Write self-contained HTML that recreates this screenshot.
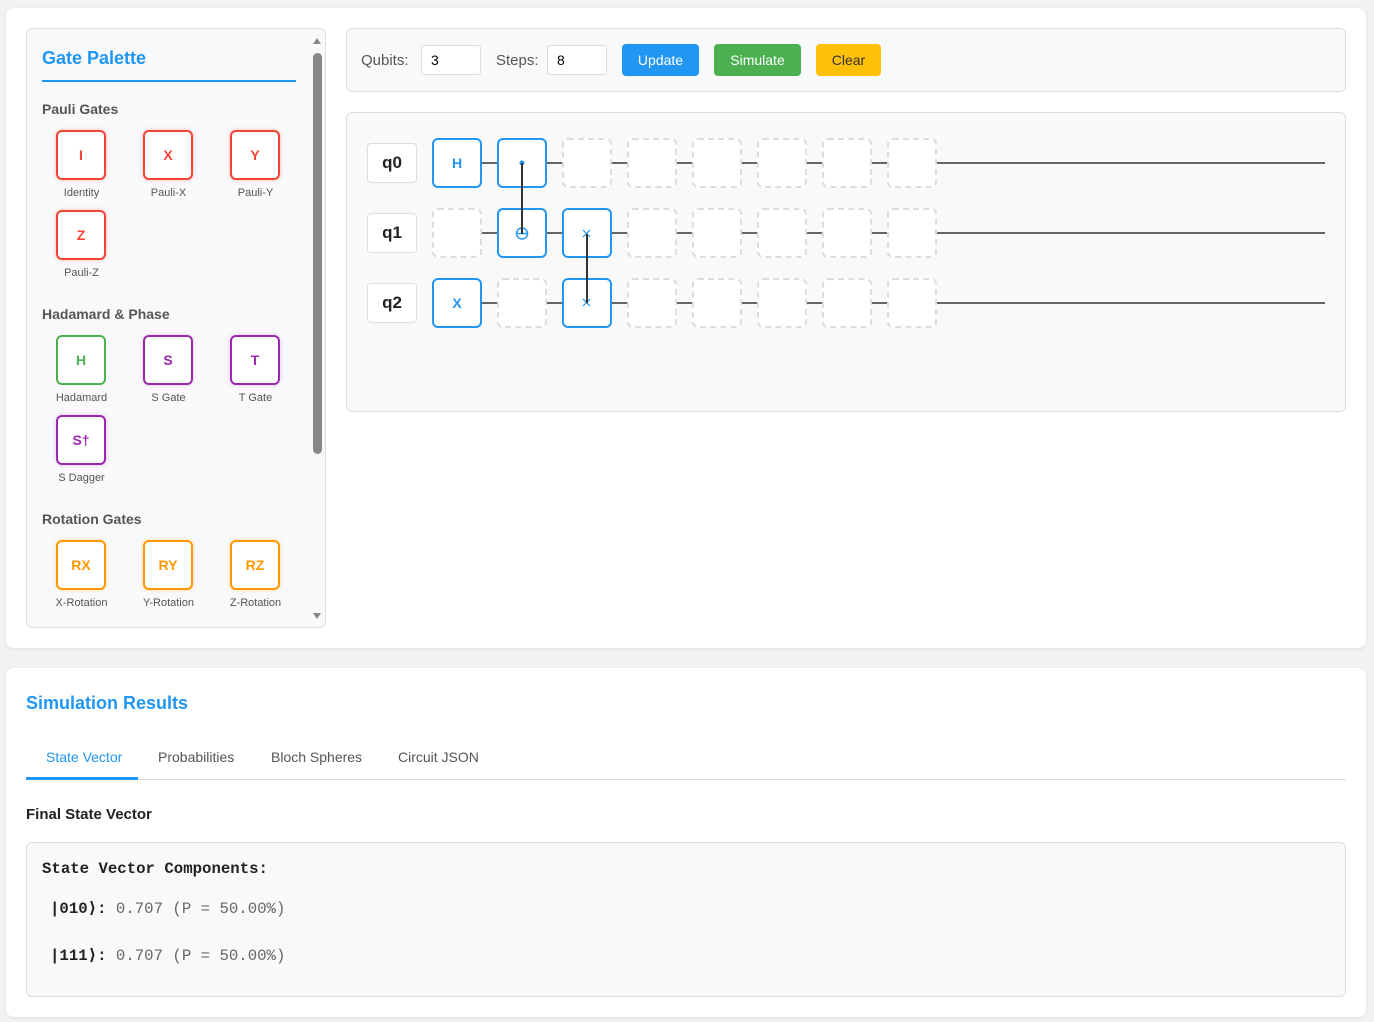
<!DOCTYPE html>
<html><head><meta charset="utf-8"><style>
*{box-sizing:border-box;margin:0;padding:0}
body{width:1374px;height:1022px;background:#f2f2f2;font-family:"Liberation Sans",sans-serif;position:relative;overflow:hidden}
.abs{position:absolute}
.card{position:absolute;background:#fff;border-radius:8px;box-shadow:0 1px 4px rgba(0,0,0,.08)}
.pal{left:26px;top:28px;width:300px;height:600px;background:#f8f9fa;border:1px solid #ddd;border-radius:6px;overflow:hidden}
.h3{font-size:14px;color:#555;font-weight:bold}
.g{position:absolute;width:50px;height:50px;border:2px solid;border-radius:6px;background:#fff;display:flex;align-items:center;justify-content:center;font-weight:bold;font-size:14px}
.gl{position:absolute;width:87px;text-align:center;font-size:11px;color:#555}
.red{border-color:#f44336;color:#f44336;box-shadow:0 0 4px rgba(244,67,54,.3)}
.grn{border-color:#4caf50;color:#4caf50}
.pur{border-color:#9c27b0;color:#9c27b0;box-shadow:0 0 4px rgba(156,39,176,.25)}
.org{border-color:#ff9800;color:#ff9800;box-shadow:0 0 4px rgba(255,152,0,.3)}
.panel{position:absolute;background:#f8f9fa;border:1px solid #ddd;border-radius:6px}
.inp{position:absolute;width:60px;height:30px;background:#fff;border:1px solid #ddd;border-radius:3px;font-size:14px;padding:6px 9px;color:#000}
.btn{position:absolute;height:32px;border-radius:4px;font-size:14px;display:flex;align-items:center;justify-content:center}
.ql{position:absolute;left:367px;width:50px;height:40px;background:#fff;border:1px solid #ddd;border-radius:4px;font-weight:bold;font-size:17px;display:flex;align-items:center;justify-content:center;color:#222}
.cell{position:absolute;width:50px;height:50px;border-radius:6px;background:#fff}
.e{border:2px dashed #ddd}
.f{border:2px solid #2196f3;color:#2196f3;font-weight:bold;font-size:14px;display:flex;align-items:center;justify-content:center}
.wire{position:absolute;left:432px;width:893px;height:2px;background:#666}
.tab{position:absolute;top:749px;font-size:14px;color:#555}
.mono{font-family:"Liberation Mono",monospace;font-size:15.7px}
</style></head><body>
<div class="card" style="left:6px;top:8px;width:1360px;height:640px"></div>
<div class="card" style="left:6px;top:668px;width:1360px;height:349px"></div>

<div class="abs pal">
 <div class="abs" style="left:15px;top:19px;font-size:18px;font-weight:bold;color:#2196f3">Gate Palette</div>
 <div class="abs" style="left:15px;top:51px;width:254px;height:2px;background:#2196f3"></div>
 <div class="abs h3" style="left:15px;top:72px">Pauli Gates</div>
 <div class="abs h3" style="left:15px;top:277px">Hadamard &amp; Phase</div>
 <div class="abs h3" style="left:15px;top:482px">Rotation Gates</div>
 <div class="abs" style="left:282px;top:0;width:18px;height:600px;background:#f8f9fa"></div>
 <div class="abs" style="left:286px;top:24px;width:9px;height:401px;background:#888;border-radius:5px"></div>
 <div class="abs" style="left:286px;top:9px;width:0;height:0;border-left:4.5px solid transparent;border-right:4.5px solid transparent;border-bottom:6px solid #888"></div>
 <div class="abs" style="left:286px;top:584px;width:0;height:0;border-left:4.5px solid transparent;border-right:4.5px solid transparent;border-top:6px solid #888"></div>
</div>
<div class="g red" style="left:56px;top:130px">I</div><div class="gl" style="left:38px;top:187px">Identity</div>
<div class="g red" style="left:143px;top:130px">X</div><div class="gl" style="left:125px;top:187px">Pauli-X</div>
<div class="g red" style="left:230px;top:130px">Y</div><div class="gl" style="left:212px;top:187px">Pauli-Y</div>
<div class="g red" style="left:56px;top:210px">Z</div><div class="gl" style="left:38px;top:267px">Pauli-Z</div>
<div class="g grn" style="left:56px;top:335px">H</div><div class="gl" style="left:38px;top:392px">Hadamard</div>
<div class="g pur" style="left:143px;top:335px">S</div><div class="gl" style="left:125px;top:392px">S Gate</div>
<div class="g pur" style="left:230px;top:335px">T</div><div class="gl" style="left:212px;top:392px">T Gate</div>
<div class="g pur" style="left:56px;top:415px">S†</div><div class="gl" style="left:38px;top:472px">S Dagger</div>
<div class="g org" style="left:56px;top:540px">RX</div><div class="gl" style="left:38px;top:597px">X-Rotation</div>
<div class="g org" style="left:143px;top:540px">RY</div><div class="gl" style="left:125px;top:597px">Y-Rotation</div>
<div class="g org" style="left:230px;top:540px">RZ</div><div class="gl" style="left:212px;top:597px">Z-Rotation</div>

<div class="panel" style="left:346px;top:28px;width:1000px;height:64px"></div>
<div class="abs" style="left:361px;top:52px;font-size:15px;color:#555">Qubits:</div>
<div class="inp" style="left:421px;top:45px">3</div>
<div class="abs" style="left:496px;top:52px;font-size:15px;color:#555">Steps:</div>
<div class="inp" style="left:547px;top:45px">8</div>
<div class="btn" style="left:622px;top:44px;width:77px;background:#2196f3;color:#fff">Update</div>
<div class="btn" style="left:714px;top:44px;width:87px;background:#4caf50;color:#fff">Simulate</div>
<div class="btn" style="left:816px;top:44px;width:65px;background:#ffc107;color:#333">Clear</div>

<div class="panel" style="left:346px;top:112px;width:1000px;height:300px;background:#f9f9f9"></div>
<div class="wire" style="top:162px"></div>
<div class="wire" style="top:232px"></div>
<div class="wire" style="top:302px"></div>
<div class="ql" style="top:143px">q0</div>
<div class="ql" style="top:213px">q1</div>
<div class="ql" style="top:283px">q2</div>

<div class="cell f" style="left:432px;top:138px">H</div>
<div class="cell f" style="left:497px;top:138px"></div>
<div class="cell e" style="left:562px;top:138px"></div>
<div class="cell e" style="left:627px;top:138px"></div>
<div class="cell e" style="left:692px;top:138px"></div>
<div class="cell e" style="left:757px;top:138px"></div>
<div class="cell e" style="left:822px;top:138px"></div>
<div class="cell e" style="left:887px;top:138px"></div>

<div class="cell e" style="left:432px;top:208px"></div>
<div class="cell f" style="left:497px;top:208px"></div>
<div class="cell f" style="left:562px;top:208px"></div>
<div class="cell e" style="left:627px;top:208px"></div>
<div class="cell e" style="left:692px;top:208px"></div>
<div class="cell e" style="left:757px;top:208px"></div>
<div class="cell e" style="left:822px;top:208px"></div>
<div class="cell e" style="left:887px;top:208px"></div>

<div class="cell f" style="left:432px;top:278px">X</div>
<div class="cell e" style="left:497px;top:278px"></div>
<div class="cell f" style="left:562px;top:278px"></div>
<div class="cell e" style="left:627px;top:278px"></div>
<div class="cell e" style="left:692px;top:278px"></div>
<div class="cell e" style="left:757px;top:278px"></div>
<div class="cell e" style="left:822px;top:278px"></div>
<div class="cell e" style="left:887px;top:278px"></div>

<svg class="abs" style="left:0;top:0" width="1374" height="420">
 <circle cx="522" cy="163" r="2.5" fill="#2196f3"/>
 <circle cx="522" cy="233.5" r="5.5" fill="none" stroke="#2196f3" stroke-width="1.5"/>
 <line x1="516.5" y1="233.5" x2="527.5" y2="233.5" stroke="#2196f3" stroke-width="1.5"/>
 <line x1="522" y1="163" x2="522" y2="234" stroke="#333" stroke-width="2"/>
 <path d="M583 230l7 7M590 230l-7 7M583 299l7 7M590 299l-7 7" stroke="#2196f3" stroke-width="1.2"/>
 <line x1="587" y1="234" x2="587" y2="303" stroke="#333" stroke-width="2"/>
</svg>

<div class="abs" style="left:26px;top:693px;font-size:18px;font-weight:bold;color:#2196f3">Simulation Results</div>
<div class="tab" style="left:46px;color:#2196f3">State Vector</div>
<div class="tab" style="left:158px">Probabilities</div>
<div class="tab" style="left:271px">Bloch Spheres</div>
<div class="tab" style="left:398px">Circuit JSON</div>
<div class="abs" style="left:26px;top:779px;width:1320px;height:1px;background:#ddd"></div>
<div class="abs" style="left:26px;top:777px;width:112px;height:3px;background:#2196f3"></div>
<div class="abs" style="left:26px;top:806px;font-size:15px;font-weight:bold;color:#222">Final State Vector</div>
<div class="abs" style="left:26px;top:842px;width:1320px;height:155px;background:#f8f9fa;border:1px solid #ddd;border-radius:6px"></div>
<div class="abs mono" style="left:42px;top:860px;color:#222;font-weight:bold">State Vector Components:</div>
<div class="abs mono" style="left:50px;top:898px;color:#666"><b style="color:#222">|010⟩:</b> 0.707 (P = 50.00%)</div>
<div class="abs mono" style="left:50px;top:945px;color:#666"><b style="color:#222">|111⟩:</b> 0.707 (P = 50.00%)</div>
</body></html>
